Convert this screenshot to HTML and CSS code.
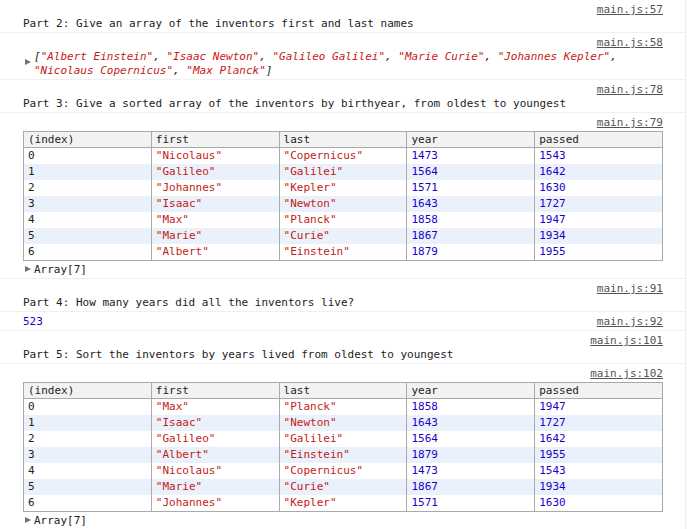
FILE: index.html
```html
<!DOCTYPE html>
<html>
<head>
<meta charset="utf-8">
<link rel="stylesheet" href="styles.css">
</head>
<body>
<div class="console">
  <div class="msg first">
    <div class="src-line"><a class="src">main.js:57</a></div>
    <div class="text">Part 2: Give an array of the inventors first and last names</div>
  </div>
  <div class="msg">
    <div class="src-line"><a class="src">main.js:58</a></div>
    <div class="expand">
      <span class="tri tri-arr"></span>
      <div class="arr">[<span class="str">"Albert Einstein"</span>, <span class="str">"Isaac Newton"</span>, <span class="str">"Galileo Galilei"</span>, <span class="str">"Marie Curie"</span>, <span class="str">"Johannes Kepler"</span>, <span class="str">"Nicolaus Copernicus"</span>, <span class="str">"Max Planck"</span>]</div>
    </div>
  </div>
  <div class="msg">
    <div class="src-line"><a class="src">main.js:78</a></div>
    <div class="text">Part 3: Give a sorted array of the inventors by birthyear, from oldest to youngest</div>
  </div>
  <div class="msg">
    <div class="src-line"><a class="src">main.js:79</a></div>
    <table class="grid">
      <thead><tr><th>(index)</th><th>first</th><th>last</th><th>year</th><th>passed</th></tr></thead>
      <tbody>
        <tr><td>0</td><td class="str">"Nicolaus"</td><td class="str">"Copernicus"</td><td class="num">1473</td><td class="num">1543</td></tr>
        <tr><td>1</td><td class="str">"Galileo"</td><td class="str">"Galilei"</td><td class="num">1564</td><td class="num">1642</td></tr>
        <tr><td>2</td><td class="str">"Johannes"</td><td class="str">"Kepler"</td><td class="num">1571</td><td class="num">1630</td></tr>
        <tr><td>3</td><td class="str">"Isaac"</td><td class="str">"Newton"</td><td class="num">1643</td><td class="num">1727</td></tr>
        <tr><td>4</td><td class="str">"Max"</td><td class="str">"Planck"</td><td class="num">1858</td><td class="num">1947</td></tr>
        <tr><td>5</td><td class="str">"Marie"</td><td class="str">"Curie"</td><td class="num">1867</td><td class="num">1934</td></tr>
        <tr><td>6</td><td class="str">"Albert"</td><td class="str">"Einstein"</td><td class="num">1879</td><td class="num">1955</td></tr>
      </tbody>
    </table>
    <div class="expand small"><span class="tri"></span><span>Array[7]</span></div>
  </div>
  <div class="msg">
    <div class="src-line"><a class="src">main.js:91</a></div>
    <div class="text">Part 4: How many years did all the inventors live?</div>
  </div>
  <div class="msg inline">
    <span class="num">523</span><a class="src">main.js:92</a>
  </div>
  <div class="msg">
    <div class="src-line"><a class="src">main.js:101</a></div>
    <div class="text">Part 5: Sort the inventors by years lived from oldest to youngest</div>
  </div>
  <div class="msg">
    <div class="src-line"><a class="src">main.js:102</a></div>
    <table class="grid">
      <thead><tr><th>(index)</th><th>first</th><th>last</th><th>year</th><th>passed</th></tr></thead>
      <tbody>
        <tr><td>0</td><td class="str">"Max"</td><td class="str">"Planck"</td><td class="num">1858</td><td class="num">1947</td></tr>
        <tr><td>1</td><td class="str">"Isaac"</td><td class="str">"Newton"</td><td class="num">1643</td><td class="num">1727</td></tr>
        <tr><td>2</td><td class="str">"Galileo"</td><td class="str">"Galilei"</td><td class="num">1564</td><td class="num">1642</td></tr>
        <tr><td>3</td><td class="str">"Albert"</td><td class="str">"Einstein"</td><td class="num">1879</td><td class="num">1955</td></tr>
        <tr><td>4</td><td class="str">"Nicolaus"</td><td class="str">"Copernicus"</td><td class="num">1473</td><td class="num">1543</td></tr>
        <tr><td>5</td><td class="str">"Marie"</td><td class="str">"Curie"</td><td class="num">1867</td><td class="num">1934</td></tr>
        <tr><td>6</td><td class="str">"Johannes"</td><td class="str">"Kepler"</td><td class="num">1571</td><td class="num">1630</td></tr>
      </tbody>
    </table>
    <div class="expand small"><span class="tri"></span><span>Array[7]</span></div>
  </div>
</div>
</body>
</html>
```

FILE: styles.css
```css
html, body {
  margin: 0;
  padding: 0;
  background: #ffffff;
}
.console {
  width: 685px;
  min-height: 529px;
  border-right: 1px solid #ececec;
  font-family: "DejaVu Sans Mono", "Liberation Mono", monospace;
  font-size: 11px;
  line-height: 14px;
  color: #222222;
}
.msg {
  border-top: 1px solid #f0f0f0;
  padding: 3px 22px 1px 23px;
}
.msg.first {
  border-top: none;
}
.src-line {
  display: flex;
  justify-content: flex-end;
}
.src {
  color: #545454;
  text-decoration: underline;
  cursor: pointer;
}
.msg.inline {
  display: flex;
  justify-content: space-between;
}
.text {
  white-space: pre-wrap;
}
.str {
  color: #c41a16;
}
.num {
  color: #1c00cf;
}
.expand {
  display: flex;
  align-items: flex-start;
}
.tri {
  flex: none;
  width: 0;
  height: 0;
  border-left: 6px solid #727272;
  border-top: 3px solid transparent;
  border-bottom: 3px solid transparent;
  margin: 3px 3px 0 2px;
}
.tri-arr {
  margin-top: 9px;
}
.expand.small {
  margin-top: 2px;
}
.arr {
  font-style: italic;
}
.grid {
  width: 640px;
  border-collapse: collapse;
  border: 1px solid #aaaaaa;
  table-layout: fixed;
  margin-top: 1px;
}
.grid th, .grid td {
  text-align: left;
  font-weight: normal;
  padding: 0 4px;
  border-left: 1px solid #aaaaaa;
  white-space: nowrap;
  overflow: hidden;
}
.grid th {
  background: #f2f2f2;
  border-bottom: 1px solid #aaaaaa;
  height: 15px;
  line-height: 15px;
  color: #222222;
}
.grid td {
  height: 16px;
  line-height: 16px;
}
.grid tbody tr:nth-child(even) td {
  background: #eaf1fb;
}
```
